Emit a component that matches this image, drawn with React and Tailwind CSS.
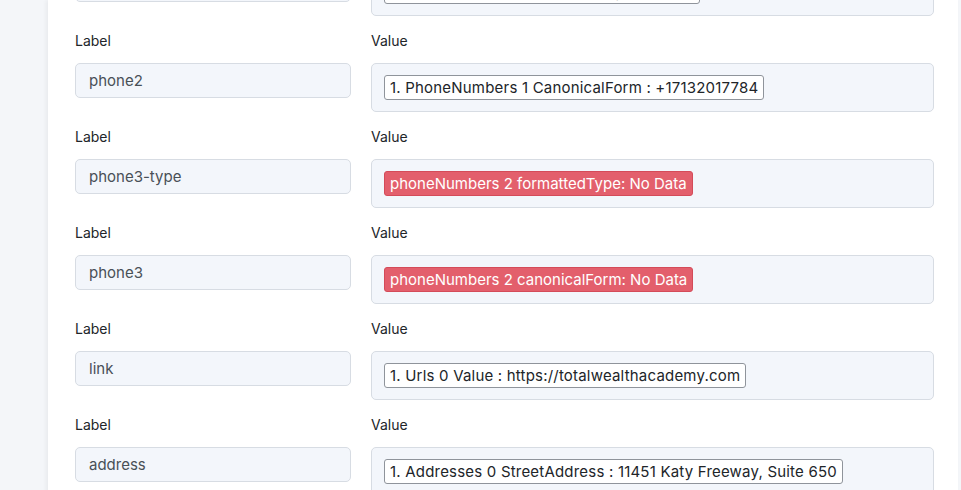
import React from "react";

const rows = [
  { label: "phone2-type", values: [{ text: "1. PhoneNumbers 1 FormattedType : Work" }] },
  { label: "phone2", values: [{ text: "1. PhoneNumbers 1 CanonicalForm : +17132017784" }] },
  { label: "phone3-type", values: [{ text: "phoneNumbers 2 formattedType: No Data", missing: true }] },
  { label: "phone3", values: [{ text: "phoneNumbers 2 canonicalForm: No Data", missing: true }] },
  { label: "link", values: [{ text: "1. Urls 0 Value : https://totalwealthacademy.com" }] },
  { label: "address", values: [{ text: "1. Addresses 0 StreetAddress : 11451 Katy Freeway, Suite 650" }] },
];

function ValueChip({ text, missing }) {
  if (missing) {
    return (
      <span className="inline-block h-[25px] px-[5px] leading-[23px] rounded-[3px] border border-[#d44b59] bg-[#e35f6c] text-white text-[15px] whitespace-nowrap">
        {text}
      </span>
    );
  }
  return (
    <span className="inline-block h-[25px] px-[5px] leading-[23px] rounded-[3px] border border-[#8f949b] bg-white text-[#212529] text-[15px] tracking-[0.2px] whitespace-nowrap">
      {text}
    </span>
  );
}

function MappingRow({ row }) {
  return (
    <div className="grid grid-cols-[276px_1fr] gap-x-5 mb-[14px]">
      <div>
        <div className="text-[14px] leading-[21px] text-[#212529] mb-3">Label</div>
        <div className="h-[35px] rounded-[5px] border border-[#d7dce3] bg-[#f3f6fb] px-[13px] text-[15px] leading-[33px] text-[#495057]">
          {row.label}
        </div>
      </div>
      <div>
        <div className="text-[14px] leading-[21px] text-[#212529] mb-3">Value</div>
        <div className="min-h-[49px] rounded-[5px] border border-[#d7dce3] bg-[#f3f6fb] px-3 py-[11px] flex flex-wrap gap-1">
          {row.values.map((v, i) => (
            <ValueChip key={i} {...v} />
          ))}
        </div>
      </div>
    </div>
  );
}

export default function App() {
  return (
    <div className="h-[490px] overflow-hidden bg-[#f4f6f9] font-['Inter',sans-serif]">
      <div className="ml-12 mr-[3px] bg-white shadow-[-2px_0_4px_rgba(0,0,0,0.05)] pl-[27px] pr-6 pt-px">
        <div className="-mt-[67px]">
          {rows.map((row) => (
            <MappingRow key={row.label} row={row} />
          ))}
        </div>
      </div>
    </div>
  );
}
